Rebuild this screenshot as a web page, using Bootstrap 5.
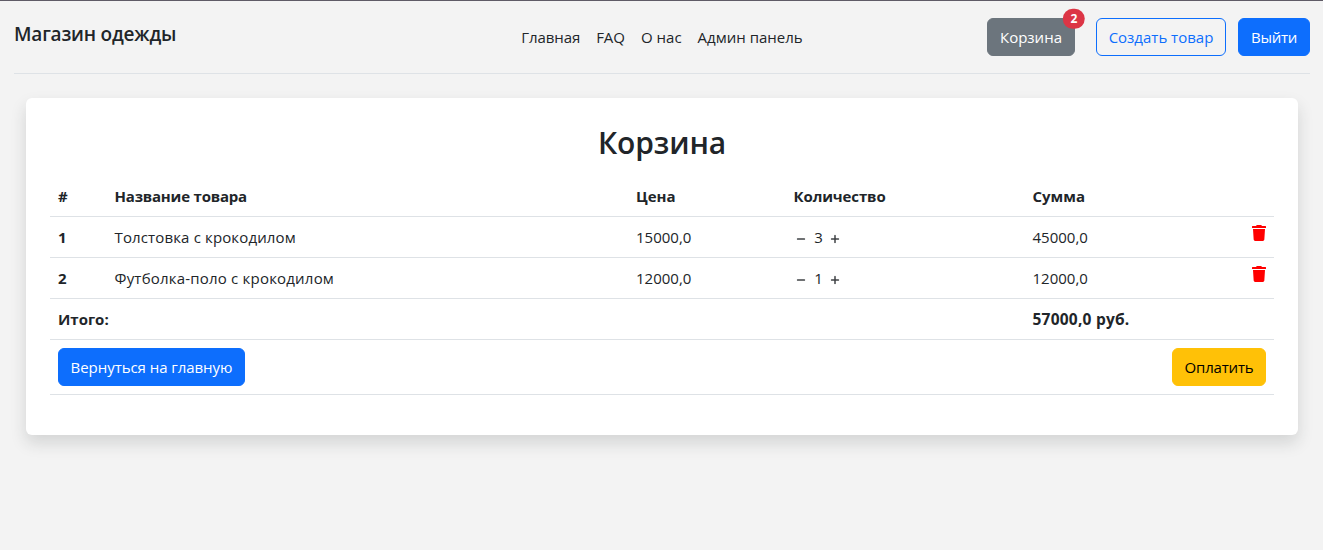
<!DOCTYPE html>
<html lang="ru">
<head>
<meta charset="utf-8">
<meta name="viewport" content="width=device-width, initial-scale=1">
<title>Корзина</title>
<link href="https://cdn.jsdelivr.net/npm/bootstrap@5.3.0/dist/css/bootstrap.min.css" rel="stylesheet">
<style>
body { background: #f3f3f3; font-family: "Open Sans", "Noto Sans", sans-serif; font-size: 15px; line-height: 24px; border-top: 1px solid #5f5b66; min-height: 100vh; }
.shop-header { margin: 0 13px 24px 14px; padding: 17px 0; height: 73px; }
.brand { font-size: 19px; line-height: 24px; font-weight: 600; margin-top: 4px; letter-spacing: -.2px; }
.site-links .nav-link { color: #212529; padding: 7px 8px 9px; font-size: 15px; line-height: 24px; }
.site-links .tight { letter-spacing: -.1px; }
.btn { white-space: nowrap; padding: 6px 0; font-size: 15px; line-height: 24px; }
.btn-cart { width: 88px; margin-right: 21px; }
.btn-create { width: 130px; margin-right: 12px; }
.btn-exit { width: 72px; letter-spacing: -.3px; }
.btn-back { width: 187px; letter-spacing: -.05px; }
.btn-pay { width: 94px; letter-spacing: -.2px; }
.badge { font-size: 12px; }
.cart-panel { margin: 0 25px 0 26px; height: 337px; border-radius: 6px; }
.cart-title { font-size: 30px; font-weight: 600; line-height: 38px; padding-top: 2px; margin-bottom: 14px; letter-spacing: -.15px; }
.cart-table { table-layout: fixed; }
.cart-table th { font-weight: 700; }
.w-num { width: 56.5px; } .w-name { width: 521.5px; } .w-price { width: 157.5px; } .w-qty { width: 239px; }
.th-name { letter-spacing: -.2px; }
.th-qty { letter-spacing: -.12px; }
.item-name { letter-spacing: .14px; }
.item-polo { letter-spacing: .2px; }
.total-sum { font-size: 15.5px; letter-spacing: .22px; }
.qty { word-spacing: .8px; }
.qty-icon { fill: #212529; stroke: #212529; stroke-width: .3; vertical-align: -3.5px; }
.qty-icon:first-child { margin: 0 .5px 0 -.5px; }
.trash { fill: #f00; display: block; margin: 0 0 8px auto; }
</style>
</head>
<body>
<header class="shop-header d-flex align-items-start justify-content-between border-bottom position-relative">
  <a href="#" class="brand text-decoration-none text-body">Магазин одежды</a>
  <ul class="nav flex-nowrap text-nowrap site-links position-absolute start-50 translate-middle-x">
    <li><a href="#" class="nav-link tight">Главная</a></li>
    <li><a href="#" class="nav-link">FAQ</a></li>
    <li><a href="#" class="nav-link">О нас</a></li>
    <li><a href="#" class="nav-link">Админ панель</a></li>
  </ul>
  <div class="d-flex">
    <a href="#" class="btn btn-secondary btn-cart position-relative">Корзина<span class="position-absolute top-0 start-100 translate-middle badge rounded-pill bg-danger">2</span></a>
    <a href="#" class="btn btn-outline-primary btn-create">Создать товар</a>
    <a href="#" class="btn btn-primary btn-exit">Выйти</a>
  </div>
</header>
<main class="cart-panel bg-white shadow p-4">
  <h2 class="cart-title text-center">Корзина</h2>
  <svg width="0" height="0" class="position-absolute">
    <symbol id="dash" viewBox="0 0 16 16"><path d="M4 8a.5.5 0 0 1 .5-.5h7a.5.5 0 0 1 0 1h-7A.5.5 0 0 1 4 8z"/></symbol>
    <symbol id="plus" viewBox="0 0 16 16"><path d="M8 4a.5.5 0 0 1 .5.5v3h3a.5.5 0 0 1 0 1h-3v3a.5.5 0 0 1-1 0v-3h-3a.5.5 0 0 1 0-1h3v-3A.5.5 0 0 1 8 4z"/></symbol>
    <symbol id="trash" viewBox="0 0 14 16"><path d="M.5 1H4l.3-.6A.8.8 0 0 1 5 0h4a.8.8 0 0 1 .7.4L10 1h3.500a.5.5 0 0 1 .5.5V3H0V1.500A.5.5 0 0 1 .5 1zM1 4h12l-.66 10.600A1.500 1.500 0 0 1 10.850 16h-7.700a1.500 1.500 0 0 1-1.490-1.400z"/></symbol>
  </svg>
  <table class="table cart-table mb-0">
    <colgroup><col class="w-num"><col class="w-name"><col class="w-price"><col class="w-qty"><col></colgroup>
    <thead>
      <tr><th>#</th><th class="th-name">Название товара</th><th>Цена</th><th class="th-qty">Количество</th><th>Сумма</th></tr>
    </thead>
    <tbody>
      <tr>
        <th>1</th><td class="item-name">Толстовка с крокодилом</td><td>15000,0</td>
        <td class="qty"><svg class="qty-icon" width="16" height="16"><use href="#dash"/></svg> 3 <svg class="qty-icon" width="16" height="16"><use href="#plus"/></svg></td>
        <td><div class="d-flex">45000,0<svg class="trash" width="14" height="16"><use href="#trash"/></svg></div></td>
      </tr>
      <tr>
        <th>2</th><td class="item-polo">Футболка-поло с крокодилом</td><td>12000,0</td>
        <td class="qty"><svg class="qty-icon" width="16" height="16"><use href="#dash"/></svg> 1 <svg class="qty-icon" width="16" height="16"><use href="#plus"/></svg></td>
        <td><div class="d-flex">12000,0<svg class="trash" width="14" height="16"><use href="#trash"/></svg></div></td>
      </tr>
      <tr><th colspan="4">Итого:</th><th class="total-sum">57000,0 руб.</th></tr>
      <tr>
        <td colspan="4"><a href="#" class="btn btn-primary btn-back">Вернуться на главную</a></td>
        <td class="text-end"><a href="#" class="btn btn-warning btn-pay">Оплатить</a></td>
      </tr>
    </tbody>
  </table>
</main>
</body>
</html>
